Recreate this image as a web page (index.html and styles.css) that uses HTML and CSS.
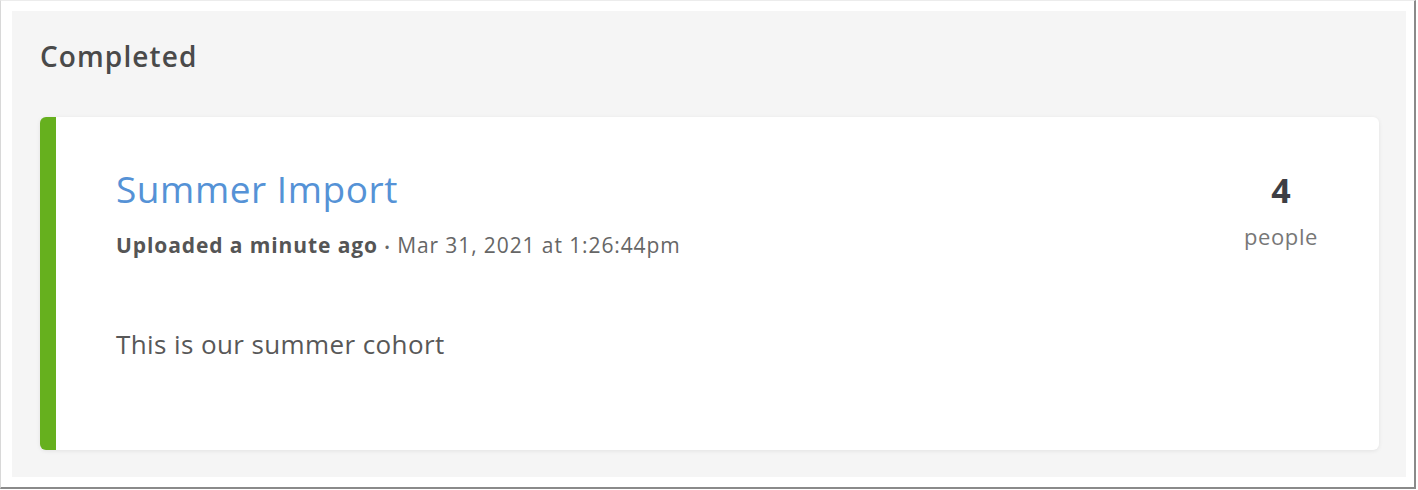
FILE: index.html
```html
<!DOCTYPE html>
<html>
<head>
<meta charset="utf-8">
<link rel="stylesheet" href="styles.css">
</head>
<body>
<div class="frame">
  <section class="panel">
    <h2 class="panel-title">Completed</h2>
    <article class="card">
      <div class="card-main">
        <h3 class="card-title">Summer Import</h3>
        <p class="card-meta"><strong>Uploaded a minute ago</strong> <span class="dot">•</span> Mar 31, 2021 at 1:26:44pm</p>
        <p class="card-desc">This is our summer cohort</p>
      </div>
      <div class="card-stat">
        <div class="stat-num">4</div>
        <div class="stat-label">people</div>
      </div>
    </article>
  </section>
</div>
</body>
</html>
```
FILE: styles.css
```css
html, body {
  margin: 0;
  padding: 0;
  background: #ffffff;
}
body {
  font-family: "Open Sans", "Lato", sans-serif;
}
.frame {
  width: 1416px;
  height: 489px;
  box-sizing: border-box;
  border-left: 1px solid #d8d8d8;
  border-top: 1px solid #ececec;
  border-right: 2px solid #8a8a8a;
  border-bottom: 2px solid #8a8a8a;
  padding: 10px 8px 10px 11px;
  display: flex;
}
.panel {
  flex: 1;
  background: #f5f5f5;
  padding: 0 27px 27px 28px;
  display: flex;
  flex-direction: column;
}
.panel-title {
  margin: 0;
  height: 106px;
  box-sizing: border-box;
  padding-top: 27px;
  font-size: 28px;
  font-weight: 600;
  color: #4a4a4a;
  line-height: 36px;
  letter-spacing: 1.1px;
}
.card {
  flex: 1;
  background: #ffffff;
  border-left: 16px solid #66b01e;
  border-radius: 6px;
  box-shadow: 0 1px 4px rgba(0, 0, 0, 0.08);
  display: flex;
  justify-content: space-between;
  padding: 0 60px 0 60px;
}
.card-main {
  padding-top: 48px;
}
.card-title {
  margin: 0;
  font-size: 37px;
  font-weight: 500;
  color: #5592d6;
  line-height: 48px;
  letter-spacing: 0.55px;
}
.card-meta {
  margin: 19px 0 0;
  font-size: 21px;
  color: #666666;
  line-height: 26px;
  letter-spacing: 0.9px;
}
.card-meta strong {
  font-weight: 700;
  color: #555555;
}
.dot {
  font-size: 15px;
  color: #666;
}
.card-desc {
  margin: 69px 0 0;
  font-size: 26px;
  color: #585858;
  line-height: 30px;
  letter-spacing: 0.4px;
}
.card-stat {
  padding-top: 52px;
  text-align: center;
  width: 80px;
  margin-right: -2px;
}
.stat-num {
  font-size: 34px;
  font-weight: 700;
  color: #3e3e44;
  line-height: 42px;
}
.stat-label {
  margin-top: 12px;
  font-size: 22px;
  color: #777777;
  line-height: 26px;
  letter-spacing: 0.6px;
}
```
